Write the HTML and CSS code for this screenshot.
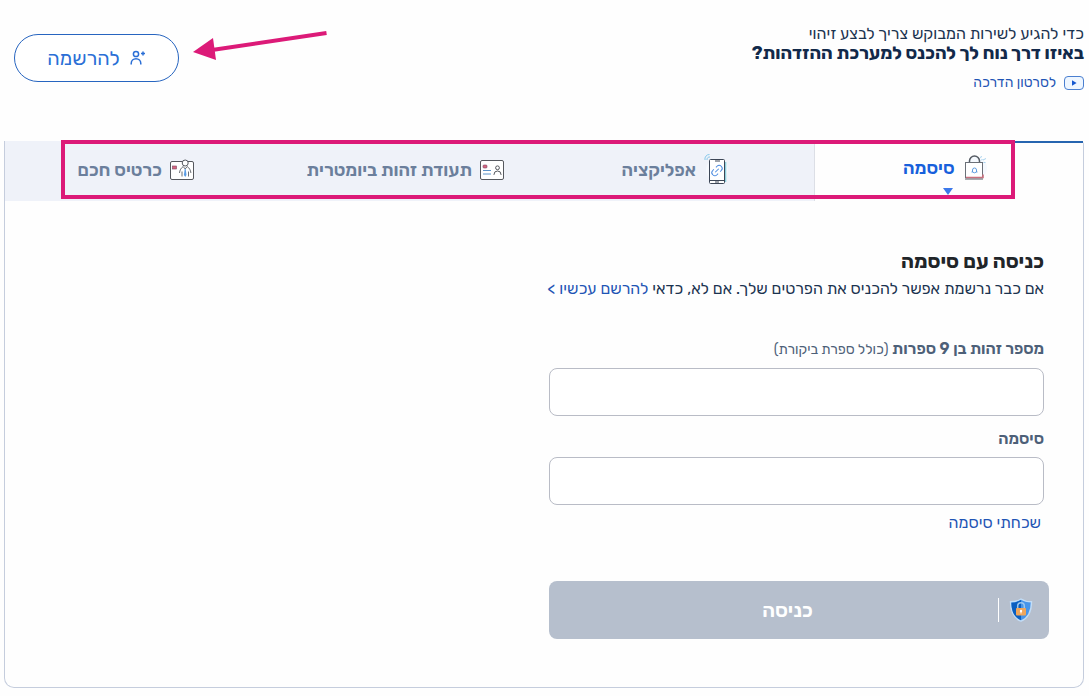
FILE: index.html
```
<!DOCTYPE html>
<html lang="he" dir="rtl">
  <head>
    <title>מערכת ההזדהות</title>
    <meta charset="UTF-8">
    <meta name="viewport" content="width=device-width, initial-scale=1">
    <link rel="stylesheet" href="styles.css">
  </head>
  <body>
    <header class="header">
      <div class="intro">
        <p class="intro-text">כדי להגיע לשירות המבוקש צריך לבצע זיהוי</p>
        <h1 class="intro-title">באיזו דרך נוח לך להכנס למערכת ההזדהות?</h1>
        <a class="video-link" href="#">
          <svg width="20" height="14" viewBox="0 0 20 14" aria-hidden="true">
            <rect x="0.5" y="0.5" width="19" height="13" rx="3.5" fill="#eef6ff" stroke="#4a7fd0"/>
            <path d="M8 4.2v5.6l4.6-2.8z" fill="#1558d0"/>
          </svg>
          לסרטון הדרכה
        </a>
      </div>
      <div class="register">
        <svg class="arrow" width="136" height="32" viewBox="0 0 136 32" aria-hidden="true">
          <path d="M134.500 3L20 20" stroke="#dc1a78" stroke-width="4"/>
          <path d="M1 22L21 8L24 30z" fill="#dc1a78"/>
        </svg>
        <button class="register-btn" type="button">
          <svg width="16" height="16" viewBox="0 0 16 16" fill="none" stroke="#2b6fd6" stroke-width="1.500" aria-hidden="true">
            <circle cx="6" cy="4" r="2.600"/>
            <path d="M1.200 14.500v-1a4.800 4.800 0 0 1 9.600 0v1M13 1.500v4M11 3.500h4"/>
          </svg>
          להרשמה
        </button>
      </div>
    </header>

    <main class="panel">
      <nav class="tabs">
        <a class="tab active" href="#">
          <svg width="24" height="28" viewBox="0 0 24 28" fill="none" aria-hidden="true">
            <circle cx="13" cy="14" r="11" fill="#f5f9fe"/>
            <path d="M6.500 9V7a5 5 0 0 1 10 0v2" stroke="#555b63" stroke-width="1.500"/>
            <rect x="2.500" y="8.500" width="17" height="15" fill="#fff" stroke="#6b7078"/>
            <path d="M3 23.500h17v-3" stroke="#c9707f" stroke-width="1.600"/>
            <path d="M2 25h18" stroke="#555b63"/>
            <path d="M9.500 18v-2a2 2 0 1 1 4 0v2l-2 .8zM8.500 18h1M13.500 18h1" stroke="#5e9ce0"/>
            <path d="M17.500 4l1-2M20 6l3-1.500M20.500 8.500h2M18 6.500l1.500-1.500" stroke="#a9d3ee"/>
          </svg>
          סיסמה
        </a>
        <a class="tab" href="#">
          <svg width="24" height="32" viewBox="0 0 24 32" fill="none" aria-hidden="true">
            <circle cx="13" cy="16" r="11" fill="#f5f8fd"/>
            <path d="M21.500 8v20" stroke="#8fd0dc" stroke-width="1.600"/>
            <rect x="5.500" y="5.500" width="15" height="24" rx="1" fill="#fff" stroke="#3c4656"/>
            <path d="M6 26.500h14" stroke="#3c4656"/>
            <path d="M11 7h5M11 28h4" stroke="#3c4656"/>
            <g transform="rotate(-45 13 16.500)" stroke="#4a8ae0">
              <path d="M11.500 19.500H10a3 3 0 0 1 0-6h1.500M14.500 13.500H16a3 3 0 0 1 0 6h-1.500M10.500 16.500h5"/>
            </g>
            <path d="M1 6A4.500 4.500 0 0 1 5.500 .5M3 6a2.600 2.600 0 0 1 3-3" stroke="#86c8ea"/>
          </svg>
          אפליקציה
        </a>
        <a class="tab" href="#">
          <svg width="24" height="20" viewBox="0 0 24 20" fill="none" aria-hidden="true">
            <rect x="0.500" y="0.500" width="23" height="19" rx="1.500" fill="#fff" stroke="#55585e"/>
            <rect x="3" y="5" width="4" height="3" rx="1" fill="#d76582" stroke="#774760" stroke-width=".6"/>
            <path d="M3 10.500h8M3 14h8" stroke="#5d93c9"/>
            <circle cx="17.500" cy="7.800" r="1.900" stroke="#55585e"/>
            <path d="M14 15v-.5a3.500 3.500 0 0 1 7 0v.5" stroke="#55585e"/>
          </svg>
          תעודת זהות ביומטרית
        </a>
        <a class="tab" href="#">
          <svg width="24" height="22" viewBox="0 0 24 22" fill="none" aria-hidden="true">
            <rect x="0.500" y="2.500" width="23" height="18" rx="1.500" fill="#fff" stroke="#55585e"/>
            <rect x="2.500" y="7" width="4" height="3" fill="#d76582" stroke="#774760" stroke-width=".6"/>
            <circle cx="15.200" cy="4" r="3" fill="#fff" stroke="#55585e"/>
            <path d="M9.500 14c.3-3 1.500-5 3.700-6.500M20.900 14c-.3-3-1.500-5-3.700-6.500M12 17.500v-5M18.500 17.500v-5" stroke="#6c7076"/>
            <path d="M13.200 7.500l2 2.500 2-2.500" stroke="#6c7076"/>
            <path d="M14.700 10h1l.8 6-1.300 2-1.300-2z" fill="#5b9de5"/>
          </svg>
          כרטיס חכם
        </a>
        <div class="highlight"></div>
      </nav>

      <form class="login">
        <h2 class="login-title">כניסה עם סיסמה</h2>
        <p class="login-text">אם כבר נרשמת אפשר להכניס את הפרטים שלך. אם לא, כדאי <a href="#">להרשם עכשיו &gt;</a></p>
        <div class="field">
          <label for="idnum">מספר זהות בן 9 ספרות <span class="note">(כולל ספרת ביקורת)</span></label>
          <input type="text" id="idnum" name="idnum">
        </div>
        <div class="field">
          <label for="password">סיסמה</label>
          <input type="password" id="password" name="password">
        </div>
        <a class="forgot" href="#">שכחתי סיסמה</a>
        <button class="submit" type="submit">
          <span class="submit-icon">
            <svg width="24" height="24" viewBox="0 0 24 24" aria-hidden="true">
              <path d="M12 1c3 2 6.500 2.800 10.500 2.800C22.500 14 19.500 20 12 23.200 4.500 20 1.500 14 1.500 3.800 5.500 3.800 9 3 12 1z" fill="#4795ea" stroke="#c3ddf6" stroke-width="1.400"/>
              <path d="M12 2v20.200C5.500 19.300 2.500 14 2.400 4.700 6 4.600 9 3.800 12 2z" fill="#0b5fc0"/>
              <path d="M8.700 11V8a3.300 3.300 0 0 1 6.600 0v3" fill="none" stroke="#9cc7ee" stroke-width="1.500"/>
              <rect x="7" y="10" width="10" height="7.500" rx="1" fill="#efa65b"/>
              <circle cx="12" cy="13" r="1.200" fill="#fff"/>
              <path d="M12 13v2.500" stroke="#fff"/>
            </svg>
          </span>
          <span class="submit-text">כניסה</span>
        </button>
      </form>
    </main>
  </body>
</html>
```
FILE: styles.css
```
* {
	box-sizing: border-box;
}
body {
	margin: 0;
	padding: 24px 5px 8px 4px;
	font-family: Rubik, "Open Sans", "Liberation Sans", sans-serif;
	font-size: 16px;
	line-height: 20px;
	color: #1b3350;
	background-color: #fefefe;
}
h1, h2, p {
	margin: 0;
}
a {
	color: #1f55b5;
	text-decoration: none;
}
svg {
	display: block;
	flex: none;
}

/* header */
.header {
	display: flex;
	justify-content: space-between;
	align-items: flex-start;
	height: 117px;
}
.intro-title {
	font-size: 18px;
	line-height: 18px;
	color: #12294a;
}
.video-link {
	display: flex;
	align-items: center;
	gap: 8px;
	margin-top: 11px;
	font-size: 14px;
}
.register {
	position: relative;
	padding: 10px 0 0 10px;
}
.register-btn {
	display: flex;
	align-items: center;
	justify-content: center;
	gap: 10px;
	width: 165px;
	height: 48px;
	border: 1px solid #2765c0;
	border-radius: 24px;
	background-color: #fff;
	color: #2b6fd6;
	font-family: inherit;
	font-size: 20px;
	cursor: pointer;
}
.arrow {
	position: absolute;
	top: 6px;
	left: 188px;
}

/* tabs */
.panel {
	border: 1px solid #c5cddd;
	border-top: none;
	border-radius: 0 4px 10px 10px;
}
.tabs {
	position: relative;
	display: grid;
	grid-template-columns: repeat(4, 1fr);
	height: 60px;
	background-color: #eff2f9;
}
.tab {
	position: relative;
	display: flex;
	align-items: center;
	justify-content: center;
	gap: 8px;
	padding: 0 8px 2px 0;
	color: #6b7f9c;
	font-size: 18px;
	font-weight: 600;
}
.tab.active {
	border-top: 2px solid #2765b0;
	border-left: 1px solid #dcdfe6;
	padding-bottom: 8px;
	background-color: #fefefe;
	color: #1760dc;
}
.tab.active::after {
	content: "";
	position: absolute;
	bottom: 6px;
	left: 50%;
	margin-left: -6px;
	border: 5px solid transparent;
	border-top: 7px solid #3c78ea;
	border-bottom: none;
}
.highlight {
	position: absolute;
	top: -1px;
	left: 56px;
	right: 68px;
	height: 59px;
	border: 4px solid #dc1a78;
	pointer-events: none;
}

/* login form */
.login {
	max-width: 534px;
	padding: 48px 34px 48px 0;
}
.login-title {
	margin-right: 5px;
	font-size: 20px;
	line-height: 24px;
	color: #212529;
}
.login-text {
	margin: 6px 5px 40px 0;
	white-space: nowrap;
}
.field {
	margin: 0 5px 8px 0;
}
.field + .field {
	margin-top: 13px;
}
.field label {
	display: block;
	margin-bottom: 8px;
	color: #4d6078;
	font-weight: 600;
}
.field .note {
	font-size: 14px;
	font-weight: normal;
}
.field input {
	display: block;
	width: 100%;
	height: 48px;
	padding: 0 12px;
	border: 1px solid #b9bcc6;
	border-radius: 8px;
	background-color: #fff;
	font-family: inherit;
	font-size: 16px;
}
.forgot {
	display: inline-block;
	margin-right: 8px;
}
.submit {
	display: flex;
	align-items: center;
	width: 100%;
	height: 58px;
	margin-top: 48px;
	padding: 0 16px 0 28px;
	border: none;
	border-radius: 8px;
	background-color: #b6bfcd;
	color: #fff;
	font-family: inherit;
	font-size: 20px;
	font-weight: 600;
}
.submit-icon {
	padding-left: 10px;
	border-left: 1px solid #fff;
}
.submit-text {
	flex: 1;
}
```
